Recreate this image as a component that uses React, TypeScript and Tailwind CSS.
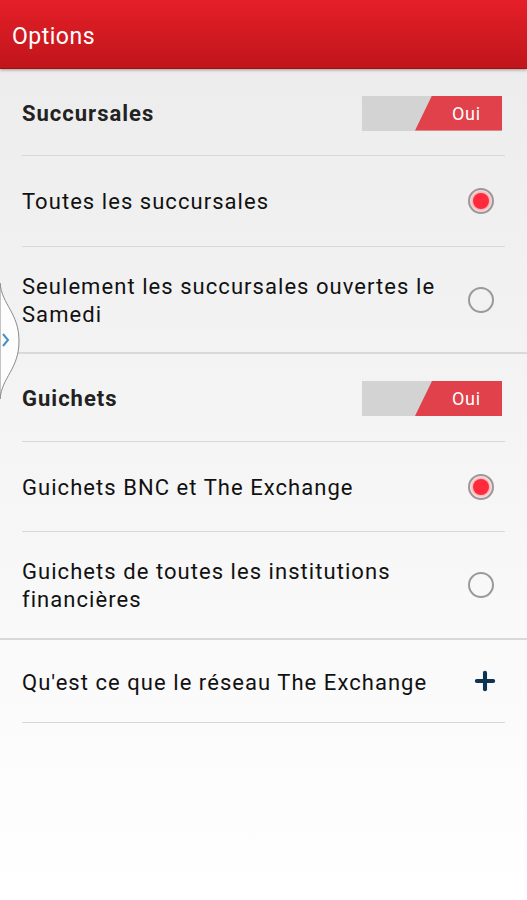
import { Plus } from 'lucide-react'

function Toggle() {
  return (
    <div className="relative w-[140px] h-[35px] bg-[#d3d3d3] shrink-0">
      <div className="absolute inset-0 bg-[#e0414b] [clip-path:polygon(70px_0,100%_0,100%_100%,53px_100%)]" />
      <span className="absolute right-[21px] top-0 h-full flex items-center text-white text-[18px] tracking-[0.8px]">Oui</span>
    </div>
  )
}

function Radio({ checked }: { checked?: boolean }) {
  return (
    <div className="w-[26px] h-[26px] rounded-full border-2 border-[#9a9a9a] flex items-center justify-center shrink-0">
      {checked && (
        <div className="w-[16px] h-[16px] rounded-full bg-[#ff2a3c] shadow-[0_0_3px_2px_rgba(255,80,90,0.45)]" />
      )}
    </div>
  )
}

function Divider() {
  return <div className="mx-[22px] h-px bg-[#d8d8d8]" />
}

function SectionTitle({ label, h }: { label: string; h: string }) {
  return (
    <div className={`flex items-center justify-between pl-[22px] pr-[25px] pt-[2px] ${h}`}>
      <span className="font-bold text-[22px] tracking-[1px] text-[#222]">{label}</span>
      <Toggle />
    </div>
  )
}

function OptionRow({ label, checked, h }: { label: string; checked?: boolean; h: string }) {
  return (
    <div className={`flex items-center justify-between pl-[22px] pr-[33px] ${h}`}>
      <span className="text-[22px] leading-[28px] tracking-[1.05px] text-[#111] pr-2 pt-[2px]">{label}</span>
      <Radio checked={checked} />
    </div>
  )
}

export default function App() {
  return (
    <div className="relative w-[527px] h-[900px] overflow-hidden bg-gradient-to-b from-[#ebebeb] to-[#ffffff] font-['Roboto',sans-serif]">
      <header className="h-[69px] flex items-center px-[12px] pt-[6px] bg-gradient-to-b from-[#e51f28] to-[#c0151b] border-b border-[#a30f14] shadow-[0_1px_3px_rgba(0,0,0,0.35)]">
        <h1 className="text-white text-[23px] tracking-[0.5px]">Options</h1>
      </header>

      <SectionTitle label="Succursales" h="h-[86px]" />
      <Divider />
      <OptionRow label="Toutes les succursales" checked h="h-[90px]" />
      <Divider />
      <OptionRow label="Seulement les succursales ouvertes le Samedi" h="h-[105px]" />
      <div className="h-[2px] bg-[#d9d9d9]" />

      <SectionTitle label="Guichets" h="h-[87px]" />
      <Divider />
      <OptionRow label="Guichets BNC et The Exchange" checked h="h-[89px]" />
      <Divider />
      <OptionRow label="Guichets de toutes les institutions financières" h="h-[106px]" />
      <div className="h-[2px] bg-[#d9d9d9]" />

      <div className="flex items-center justify-between pl-[22px] pr-[28px] h-[82px]">
        <span className="text-[22px] tracking-[1.05px] text-[#111] pt-[2px]">Qu'est ce que le réseau The Exchange</span>
        <Plus className="w-[28px] h-[28px] text-[#0e3452]" strokeWidth={3.5} />
      </div>
      <Divider />

      <svg className="absolute left-0 top-[283px]" width="24" height="116" viewBox="0 0 24 116">
        <path d="M0 0 C2 22 19 30 19 58 C19 86 2 94 0 116 Z" fill="#fdfdfd" stroke="#8a8a8a" strokeWidth="1" />
        <path d="M3 51 L8 57 L3 63" fill="none" stroke="#4a8fc2" strokeWidth="2" />
      </svg>
    </div>
  )
}
